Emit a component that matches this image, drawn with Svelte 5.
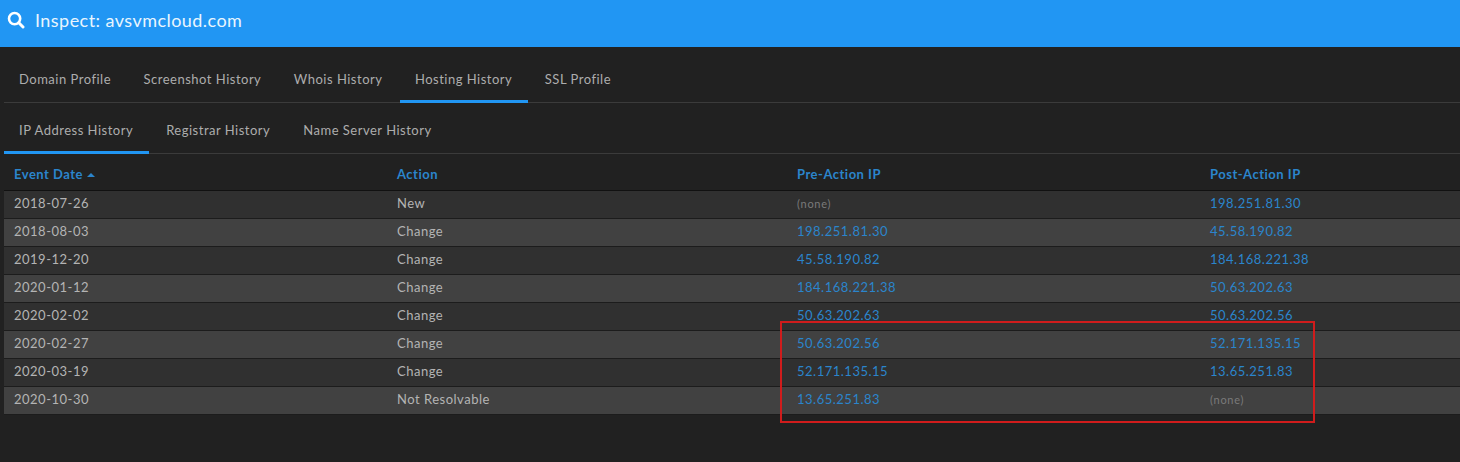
<script>
  const tabs = ['Domain Profile', 'Screenshot History', 'Whois History', 'Hosting History', 'SSL Profile'];
  const subTabs = ['IP Address History', 'Registrar History', 'Name Server History'];
  const rows = [
    ['2018-07-26', 'New', null, '198.251.81.30'],
    ['2018-08-03', 'Change', '198.251.81.30', '45.58.190.82'],
    ['2019-12-20', 'Change', '45.58.190.82', '184.168.221.38'],
    ['2020-01-12', 'Change', '184.168.221.38', '50.63.202.63'],
    ['2020-02-02', 'Change', '50.63.202.63', '50.63.202.56'],
    ['2020-02-27', 'Change', '50.63.202.56', '52.171.135.15'],
    ['2020-03-19', 'Change', '52.171.135.15', '13.65.251.83'],
    ['2020-10-30', 'Not Resolvable', '13.65.251.83', null]
  ];
</script>

<div class="page">
  <header class="bar">
    <svg class="search" viewBox="0 0 18 18" width="18" height="18" aria-hidden="true">
      <circle cx="7.6" cy="7.6" r="5.6" fill="none" stroke="currentColor" stroke-width="2.6" />
      <path d="M11.8 11.8 L16 16" fill="none" stroke="currentColor" stroke-width="3" stroke-linecap="round" />
    </svg>
    <span>Inspect: avsvmcloud.com</span>
  </header>

  <main class="content">
    <nav class="tabs main-tabs">
      {#each tabs as t}
        <span class="tab" class:active={t === 'Hosting History'}>{t}</span>
      {/each}
    </nav>
    <nav class="tabs sub-tabs">
      {#each subTabs as t}
        <span class="tab" class:active={t === 'IP Address History'}>{t}</span>
      {/each}
    </nav>

    <div class="table">
      <div class="row head">
        <div class="cell">Event Date <i class="caret"></i></div>
        <div class="cell">Action</div>
        <div class="cell">Pre-Action IP</div>
        <div class="cell">Post-Action IP</div>
      </div>
      {#each rows as r}
        <div class="row body">
          <div class="cell">{r[0]}</div>
          <div class="cell">{r[1]}</div>
          {#each [r[2], r[3]] as ip}
            <div class="cell">
              {#if ip}<span class="ip">{ip}</span>{:else}<span class="none">(none)</span>{/if}
            </div>
          {/each}
        </div>
      {/each}
    </div>
  </main>
  <div class="highlight"></div>
</div>

<style>
  :global(body) {
    margin: 0;
    background: #212121;
  }
  .page {
    position: relative;
    width: 1460px;
    height: 462px;
    overflow: hidden;
    background: #212121;
    font-family: Lato, sans-serif;
    font-size: 13px;
    color: #b4b4b4;
  }
  .bar {
    box-sizing: border-box;
    height: 47px;
    padding: 0 0 8px 7px;
    display: flex;
    align-items: center;
    gap: 10px;
    background: #2196f3;
    color: #e9f5fe;
    font-size: 18px;
    letter-spacing: 0.45px;
  }
  .search {
    color: #ffffff;
    flex: none;
  }
  .content {
    padding: 9px 0 0 4px;
  }
  .tabs {
    display: flex;
    box-sizing: border-box;
    border-bottom: 1px solid #3b3b3b;
  }
  .main-tabs {
    height: 47px;
    gap: 1.5px;
  }
  .sub-tabs {
    height: 51px;
    gap: 2px;
  }
  .tab {
    box-sizing: border-box;
    margin-bottom: -1px;
    display: flex;
    align-items: center;
    padding: 2px 16px 0 15px;
    color: #adadad;
    border-bottom: 3px solid transparent;
    letter-spacing: 0.5px;
  }
  .sub-tabs .tab {
    padding-top: 5px;
  }
  .tab.active {
    border-bottom-color: #2196f3;
  }
  .table {
    display: flex;
    flex-direction: column;
  }
  .row {
    display: grid;
    grid-template-columns: 383px 400px 413px 1fr;
    align-items: center;
  }
  .cell {
    padding-left: 10px;
    letter-spacing: 0.5px;
  }
  .head {
    height: 37px;
    padding-top: 4px;
    color: #2b85cc;
    font-weight: 700;
    border-bottom: 1px solid #111111;
    box-sizing: border-box;
  }
  .caret {
    display: inline-block;
    width: 0;
    height: 0;
    margin-left: 0;
    vertical-align: 2px;
    border-left: 4px solid transparent;
    border-right: 4px solid transparent;
    border-bottom: 4px solid #2b85cc;
  }
  .body {
    height: 28px;
    padding-bottom: 4px;
    box-sizing: border-box;
    border-bottom: 1px solid #1c1c1c;
    background: #303030;
  }
  .body:nth-child(odd) {
    background: #414141;
  }
  .ip {
    color: #2b85cc;
  }
  .none {
    font-size: 11px;
    letter-spacing: 0.7px;
    color: #7a7a7a;
  }
  .highlight {
    position: absolute;
    left: 780px;
    top: 321px;
    width: 531px;
    height: 98px;
    border: 2px solid #d01c1c;
  }
</style>
